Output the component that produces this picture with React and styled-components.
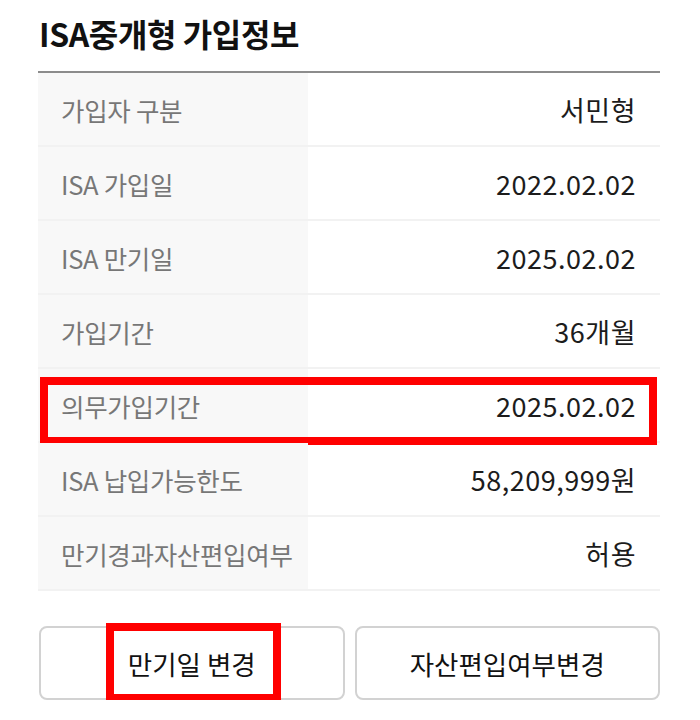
import React from 'react';
import styled, { createGlobalStyle } from 'styled-components';

const GlobalStyle = createGlobalStyle`
  body {
    margin: 0;
    background: #fff;
    font-family: 'Noto Sans CJK KR', 'Noto Sans', sans-serif;
  }
`;

const Page = styled.div`
  width: 700px;
  padding: 12px 40px 0 38px;
  box-sizing: border-box;
`;

const Title = styled.h1`
  margin: 0 0 0 1px;
  height: 59px;
  font-size: 32px;
  font-weight: 700;
  color: #111;
  letter-spacing: -0.4px;
  line-height: 42px;
`;

const Table = styled.div`
  border-top: 2px solid #8c8c8c;
`;

const Row = styled.div`
  position: relative;
  display: grid;
  grid-template-columns: 270px 1fr;
  height: 72px;
  border-bottom: 2px solid #f2f2f2;
`;

const Label = styled.div`
  display: flex;
  align-items: center;
  padding-left: 23px;
  background: #f8f8f8;
  color: #777;
  font-size: 25.5px;
  letter-spacing: -0.3px;
`;

const Value = styled.div`
  display: flex;
  align-items: center;
  justify-content: flex-end;
  padding-right: 24px;
  color: #1c1c1c;
  font-size: 27px;
  letter-spacing: 0.5px;
`;

const Highlight = styled.div`
  position: absolute;
  left: ${(p) => p.$left}px;
  right: ${(p) => p.$right}px;
  top: ${(p) => p.$top}px;
  bottom: ${(p) => p.$bottom}px;
  border: 8px solid #ff0000;
  pointer-events: none;
`;

const Buttons = styled.div`
  display: grid;
  grid-template-columns: 1fr 1fr;
  gap: 10px;
  margin-top: 35px;
  margin-left: 1px;
`;

const Button = styled.button`
  position: relative;
  height: 74px;
  border: 2px solid #d2d2d2;
  border-radius: 8px;
  background: #fff;
  color: #111;
  font-family: inherit;
  font-size: 26.5px;
  letter-spacing: 0;
  padding: 0;
`;

const rows = [
  ['가입자 구분', '서민형'],
  ['ISA 가입일', '2022.02.02'],
  ['ISA 만기일', '2025.02.02'],
  ['가입기간', '36개월'],
  ['의무가입기간', '2025.02.02', true],
  ['ISA 납입가능한도', '58,209,999원'],
  ['만기경과자산편입여부', '허용'],
];

export default function App() {
  return (
    <>
      <GlobalStyle />
      <Page>
        <Title>ISA중개형 가입정보</Title>
        <Table>
          {rows.map(([label, value, marked]) => (
            <Row key={label}>
              <Label>{label}</Label>
              <Value>{value}</Value>
              {marked && <Highlight $left={2} $right={3} $top={8} $bottom={-4} />}
            </Row>
          ))}
        </Table>
        <Buttons>
          <Button>
            만기일 변경
            <Highlight $left={65} $right={62} $top={-5} $bottom={-4} />
          </Button>
          <Button>자산편입여부변경</Button>
        </Buttons>
      </Page>
    </>
  );
}
